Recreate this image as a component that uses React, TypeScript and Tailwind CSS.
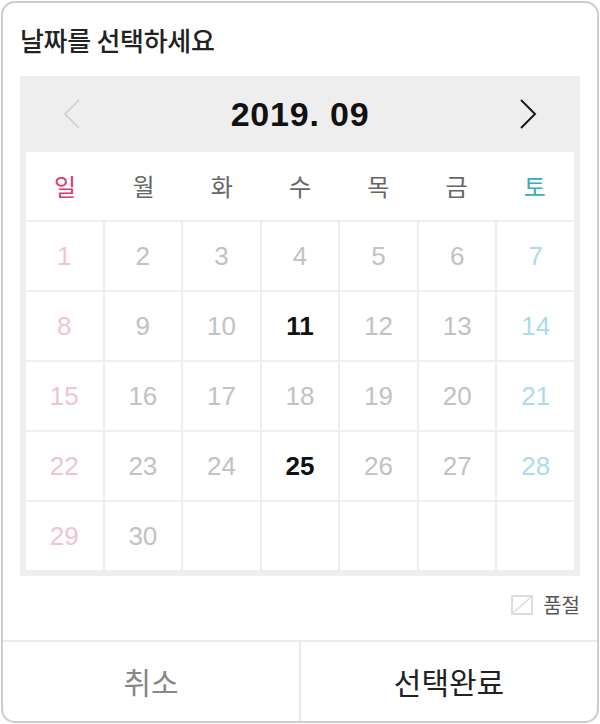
import React from 'react';

const weekdays = ['일', '월', '화', '수', '목', '금', '토'];

const days: (number | null)[] = [
    1, 2, 3, 4, 5, 6, 7,
    8, 9, 10, 11, 12, 13, 14,
    15, 16, 17, 18, 19, 20, 21,
    22, 23, 24, 25, 26, 27, 28,
    29, 30, null, null, null, null, null,
];

const active = [11, 25];

const DatePicker: React.FC = () => {
    const dayColor = (d: number, i: number) => {
        if (active.includes(d)) return 'text-[#111] font-bold';
        if (i % 7 === 0) return 'text-[#f1c3d3]';
        if (i % 7 === 6) return 'text-[#acdcea]';
        return 'text-[#c2c2c2]';
    };

    return (
        <div className="w-[600px] h-[724px] p-px bg-white font-['Liberation_Sans','Noto_Sans_CJK_KR',sans-serif]">
            <div className="w-[598px] h-[722px] border-2 border-[#cdcdcd] rounded-[14px] flex flex-col overflow-hidden bg-white">
                <div className="h-[73px] px-[17px] flex items-center pb-px">
                    <h2 className="text-[26px] font-medium text-[#222] font-['Noto_Sans_CJK_KR',sans-serif] tracking-[-0.3px]">날짜를 선택하세요</h2>
                </div>

                <div className="mx-[17px] bg-[#eeeeee] px-[6px] pb-[6px]">
                    <div className="h-[76px] flex items-center justify-between px-[34px]">
                        <button className="w-6 h-8 flex items-center justify-center">
                            <svg width="18" height="32" viewBox="0 0 18 32" fill="none">
                                <path d="M16 2 L2 16 L16 30" stroke="#cfcfcf" strokeWidth="1.6" />
                            </svg>
                        </button>
                        <div className="text-[34px] font-bold text-[#111] tracking-[0.8px] leading-none">2019. 09</div>
                        <button className="w-6 h-8 flex items-center justify-center">
                            <svg width="18" height="32" viewBox="0 0 18 32" fill="none">
                                <path d="M2 2 L16 16 L2 30" stroke="#1a1a1a" strokeWidth="2" />
                            </svg>
                        </button>
                    </div>

                    <div className="bg-white grid grid-cols-7 h-[68px] items-center mb-[2px]">
                        {weekdays.map((w, i) => (
                            <div
                                key={w}
                                className={`text-center text-[24px] font-['Noto_Sans_CJK_KR',sans-serif] ${i === 0 ? 'text-[#dc3a6b]' : i === 6 ? 'text-[#3aabbb]' : 'text-[#666]'}`}
                            >
                                {w}
                            </div>
                        ))}
                    </div>

                    <div className="grid grid-cols-7 gap-[2px]">
                        {days.map((d, i) => (
                            <div key={i} className="bg-white h-[68px] flex items-center justify-center">
                                {d !== null && (
                                    <span className={`text-[26px] ${dayColor(d, i)}`}>{d}</span>
                                )}
                            </div>
                        ))}
                    </div>
                </div>

                <div className="h-[64px] px-[17px] flex items-center justify-end gap-[10px] pb-[6px]">
                    <svg width="22" height="20" viewBox="0 0 22 20" fill="none">
                        <rect x="1" y="1" width="20" height="18" stroke="#dddddd" strokeWidth="2" />
                        <path d="M2 18 L20 2" stroke="#dddddd" strokeWidth="1.5" />
                    </svg>
                    <span className="text-[20px] text-[#555] font-['Noto_Sans_CJK_KR',sans-serif]">품절</span>
                </div>

                <div className="flex-1 flex border-t-2 border-[#ebebeb]">
                    <button className="flex-1 flex items-center justify-center text-[30px] text-[#888] font-['Noto_Sans_CJK_KR',sans-serif] border-r-2 border-[#ebebeb]">
                        취소
                    </button>
                    <button className="flex-1 flex items-center justify-center text-[30px] text-[#222] font-['Noto_Sans_CJK_KR',sans-serif]">
                        선택완료
                    </button>
                </div>
            </div>
        </div>
    );
};

export default function App() {
    return <DatePicker />;
}
